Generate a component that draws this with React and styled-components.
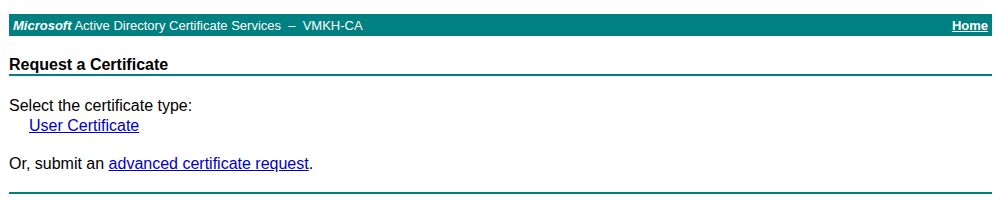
import React from 'react';
import styled, { createGlobalStyle } from 'styled-components';

const GlobalStyle = createGlobalStyle`
  body {
    margin: 0;
    background: #ffffff;
    font-family: "Liberation Sans", Arial, sans-serif;
    color: #000000;
  }
`;

const Page = styled.div`
  padding: 14px 8px 0 9px;
`;

const Banner = styled.div`
  height: 22px;
  background: #008080;
  color: #ffffff;
  font-size: 13px;
  display: flex;
  align-items: center;
  justify-content: space-between;
  padding: 0 4px 0 4px;
`;

const Brand = styled.span`
  font-weight: bold;
  font-style: italic;
`;

const HomeLink = styled.a`
  color: #ffffff;
  font-weight: bold;
  text-decoration: underline;
`;

const Title = styled.div`
  margin-top: 20px;
  font-size: 16px;
  font-weight: bold;
  line-height: 18px;
  border-bottom: 2px solid #008080;
`;

const Content = styled.div`
  padding-top: 20px;
  font-size: 16px;
  line-height: 20px;
`;

const Indented = styled.div`
  padding-left: 20px;
`;

const Paragraph = styled.p`
  margin: 18px 0 0 0;
`;

const Link = styled.a`
  color: #0000c8;
  text-decoration: underline;
`;

const Rule = styled.div`
  margin-top: 18px;
  height: 2px;
  background: #008080;
`;

export default function App() {
  return (
    <>
      <GlobalStyle />
      <Page>
        <Banner>
          <span>
            <Brand>Microsoft</Brand> Active Directory Certificate Services &nbsp;–&nbsp; VMKH-CA
          </span>
          <HomeLink href="#">Home</HomeLink>
        </Banner>
        <Title>Request a Certificate</Title>
        <Content>
          <div>Select the certificate type:</div>
          <Indented>
            <Link href="#">User Certificate</Link>
          </Indented>
          <Paragraph>
            Or, submit an <Link href="#">advanced certificate request</Link>.
          </Paragraph>
        </Content>
        <Rule />
      </Page>
    </>
  );
}
